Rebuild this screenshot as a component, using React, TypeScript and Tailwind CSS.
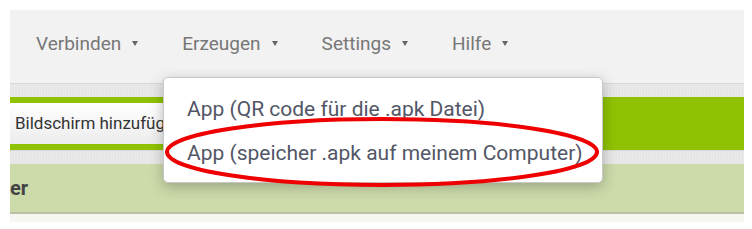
import React from 'react'

const menu = ['Verbinden', 'Erzeugen', 'Settings', 'Hilfe']

function Caret() {
  return <span className="ml-[11px] inline-block w-0 h-0 border-l-[3px] border-r-[3px] border-t-[5px] border-l-transparent border-r-transparent border-t-[#666] translate-y-[-1px]" />
}

function Strip() {
  return (
    <div className="h-[14px] bg-[#e6e6e6] bg-[repeating-linear-gradient(90deg,#e2e2e2_0px,#ececec_2px,#e4e4e4_3px)] border-t border-[#d8d8d8]" />
  )
}

export default function App() {
  return (
    <div className="relative w-[752px] h-[229px] bg-white pt-[10px] pl-[10px] pr-[8px] font-['Roboto','Liberation_Sans',sans-serif] overflow-hidden">
      <div className="h-[73px] bg-[#f2f2f2] flex items-center pl-[26px] gap-[44px] text-[19px] text-[#777]">
        {menu.map((m) => (
          <div key={m} className="flex items-center pb-[4px]">
            <span>{m}</span>
            <Caret />
          </div>
        ))}
      </div>
      <Strip />
      <div className="h-[53px] bg-[#8fc202] py-[6px]">
        <div className="h-full w-[200px] bg-gradient-to-b from-white to-[#ececec] border-r border-[#ccc] flex items-center pl-[5px] text-[17px] text-[#333]">
          Bildschirm hinzufügen
        </div>
      </div>
      <Strip />
      <div className="h-[50px] bg-[#cddbab] border-b-2 border-[#b9c0a8] flex items-center text-[20px] font-bold text-[#444]">
        er
      </div>
      <div className="h-[8px] bg-[#f7f7f2]" />

      <div className="absolute left-[163px] top-[77px] w-[440px] h-[106px] bg-white border border-[#c8c8c8] rounded-[5px] shadow-[0_4px_14px_rgba(0,0,0,0.25)] pt-[16px] pl-[23px] text-[21px] text-[#525666]">
        <div className="h-[44px] leading-[30px]">App (QR code für die .apk Datei)</div>
        <div className="h-[44px] leading-[30px]">App (speicher .apk auf meinem Computer)</div>
      </div>

      <svg className="absolute left-0 top-0" width="752" height="229">
        <ellipse cx="382" cy="152" rx="215" ry="33" fill="none" stroke="#ee0000" strokeWidth="4" />
      </svg>
    </div>
  )
}
